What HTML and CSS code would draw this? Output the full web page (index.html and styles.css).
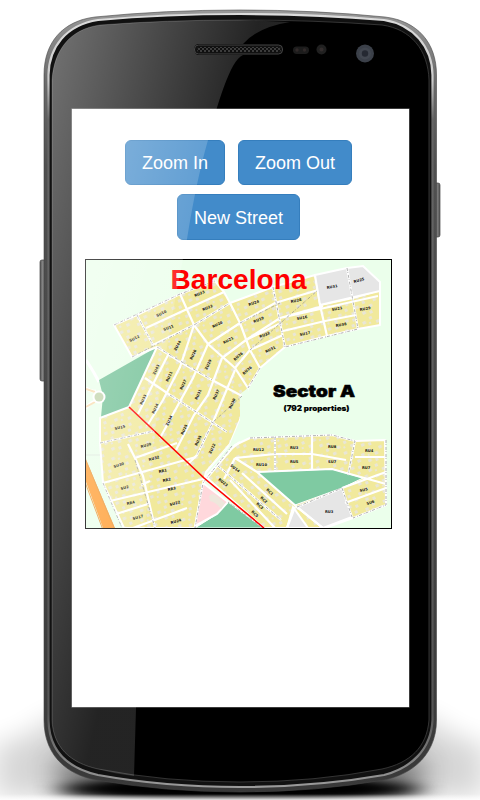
FILE: index.html
```html
<!DOCTYPE html>
<html lang="en">
<head>
<meta charset="utf-8">
<title>Barcelona</title>
<link rel="stylesheet" href="styles.css">
</head>
<body>
<div class="device">
<svg class="frame" viewBox="0 0 480 800" aria-hidden="true">
  <defs>
    <filter id="soft" x="-30%" y="-60%" width="160%" height="220%"><feGaussianBlur stdDeviation="16 12"/></filter>
    <filter id="contact" x="-20%" y="-100%" width="140%" height="300%"><feGaussianBlur stdDeviation="14 4"/></filter>
    <linearGradient id="rim" x1="0" y1="10" x2="0" y2="792" gradientUnits="userSpaceOnUse">
      <stop offset="0" stop-color="#999"/><stop offset=".1" stop-color="#686868"/><stop offset=".2" stop-color="#505050"/><stop offset="1" stop-color="#393939"/>
    </linearGradient>
    <linearGradient id="shine" x1="0" y1="10" x2="0" y2="792" gradientUnits="userSpaceOnUse">
      <stop offset="0" stop-color="#ddd"/><stop offset=".09" stop-color="#ccc"/><stop offset=".14" stop-color="#666"/><stop offset=".9" stop-color="#555"/><stop offset="1" stop-color="#a0a0a0"/>
    </linearGradient>
    <linearGradient id="floor" x1="0" y1="0" x2="0" y2="1"><stop offset="0" stop-color="#fff" stop-opacity="0"/><stop offset="1" stop-color="#fff"/></linearGradient>
    <linearGradient id="key"><stop offset="0" stop-color="#555"/><stop offset=".4" stop-color="#888"/><stop offset="1" stop-color="#555"/></linearGradient>
    <pattern id="mesh" width="4" height="4" patternUnits="userSpaceOnUse"><circle cx="1" cy="1" r="1"/><circle cx="3" cy="3" r="1"/></pattern>
  </defs>
  <path d="M-5 745Q35 738 55 715H425Q445 738 485 745V797H-5Z" fill="#000" opacity=".16" filter="url(#soft)"/>
  <path d="M60 752L90 770H390L420 752L415 798H65Z" fill="#000" opacity=".6" filter="url(#soft)"/>
  <ellipse cx="240" cy="789" rx="178" ry="11" fill="#000" filter="url(#contact)"/>
  <ellipse cx="240" cy="788" rx="140" ry="10" fill="#000" filter="url(#contact)"/>
  <rect y="794" width="480" height="7" fill="url(#floor)"/>
  <rect x="40" y="260" width="7" height="121" rx="2" fill="url(#key)" stroke="#444" stroke-width=".7"/>
  <rect x="434" y="183" width="6" height="54" rx="2" fill="url(#key)" stroke="#444" stroke-width=".7"/>
  <path d="M44 75C44 42 63 21 95 17Q165 10 240 10T385 17C417 21 436.500 42 436.500 75V720C436.500 754 413 774 384 780Q315 792 240 792T96 780C65 774 44 754 44 720Z" fill="url(#rim)" stroke="#444" stroke-width=".6"/>
  <path d="M48.500 75C49 47 66 25 98 20Q165 14 240 14T384 20C414 25 432 47 432.500 75V720C431 750 411 768 384 775Q315 787 240 787T98 775C67 768 49 750 48.500 720Z" fill="#111" stroke="url(#shine)" stroke-width="2.200"/>
  <path d="M52 80C54 50 70 29 100 25Q165 20 240 20T382 25C411 29 428 50 429 80V720C427 747 410 763 382 769Q315 782 240 782T98 769C70 763 53 747 52 720Z" fill="#000" stroke="#484848" stroke-width=".7"/>
  <rect x="194.500" y="45" width="88" height="9" rx="4" fill="#111" stroke="#444"/>
  <rect x="197" y="47" width="84" height="5" rx="2.500" fill="#3c3c3c"/>
  <rect x="197" y="47" width="84" height="5" rx="2.500" fill="url(#mesh)"/>
  <rect x="293" y="46.500" width="16" height="7.500" rx="3.700" fill="#1c1c1c"/>
  <circle cx="297" cy="50" r="1.700" fill="#302929"/><circle cx="304.500" cy="50" r="1.700" fill="#302929"/>
  <circle cx="321.500" cy="49.500" r="5" fill="#202020"/><circle cx="321.500" cy="49.500" r="2" fill="#332d2d"/>
  <circle cx="365" cy="53.500" r="9" fill="#3b4049"/><circle cx="365" cy="53.500" r="6" fill="#424750"/><circle cx="365" cy="53.500" r="3.200" fill="#252932"/>
</svg>
<main class="screen">
  <div class="toolbar">
    <button class="btn zoom-in">Zoom In</button>
    <button class="btn zoom-out">Zoom Out</button>
    <button class="btn street">New Street</button>
  </div>
  <svg class="map" viewBox="86 260 305 268">
    <defs>
      <pattern id="houses" width="19" height="17" patternUnits="userSpaceOnUse" patternTransform="rotate(-25)">
        <rect width="19" height="17" fill="#f1e99c"/>
        <path d="M2 3h3.500v3H2zM10 1h3v3h-3zM15 7h3.500v3h-3.500zM6 11h3.500v3H6zM13 13h3v3h-3zM8 6h2v2h-2z" fill="#e9e6d6"/>
      </pattern>
    </defs>
    <rect x="86" y="260" width="305" height="268" fill="#ebffeb"/>
    <path d="M86 360Q94 372 99 382M86 388Q91 392 96 391M86 408Q91 402 96 401" fill="none" stroke="#fff" stroke-width="3"/>
    <path d="M86 389L95 392M86 407L95 402" stroke="#f8dcae" stroke-width="2"/>
    <path d="M86 455H101" stroke="#dfe9df"/>
    <path d="M157 347L99 380L103 396L101 417L129 407L140 384Z" fill="#74c298"/>
    <g fill="url(#houses)" stroke="#fff" stroke-width="2" stroke-linejoin="round">
      <path d="M114 325L137 315L180 294L215 281L224 292L230 303L273 287L315 275L320 305L353 298L380 290V325L358 329L327 336L285 347L260 368L248 388L240 420L230 444L206 472L203 483L195 528H124L103 483L100 443V418L129 407L157 347L132 357Z"/>
      <path d="M206 477L235 445L250 438L332 435L355 441L385 440L386 505L353 518L325 528H264Z"/>
    </g>
    <path d="M248 388L240 394L240 420L230 444L206 472L226 448L240 438L250 410Z" fill="#ebffeb"/>
    <path d="M315 275L347 268L363 266L380 282V291L320 305ZM297 507L342 488L352 517L323 528ZM293 507L308 528H287Z" fill="#e6e6e6" stroke="#fff" stroke-width="2"/>
    <path d="M257 472L332 469L363 478L342 488L295 505ZM228 502L263 528H195L217 514Z" fill="#7fcaa2" stroke="#fff"/>
    <path d="M203 483L228 502L217 514L195 526Z" fill="#ffd8dc" stroke="#fff" stroke-width="2"/>
    <path d="M209 496Q213 492 218 497L225 503L221 509Q216 502 210 501Z" fill="#eee7dc"/>
    <path d="M86 460L115 528H103L86 482Z" fill="#ff9f36"/>
    <path d="M85 458L115 530M85 482L103 530" fill="none" stroke="#e99a40"/>
    <circle cx="99" cy="397" r="6.500" fill="#fff"/><circle cx="99" cy="397" r="4.500" fill="#c0d3aa"/>
    <g fill="none" stroke="#fff" stroke-width="2.200">
      <path d="M137 315L153 345M180 294L194 325M146 328L224 292M153 345L194 325L230 303M194 325L208 344L235 368L248 388"/>
      <path d="M157 347L182 363L212 380L242 396M145 378L170 395L227 432"/>
      <path d="M168 355L150 390L138 414M194 325L180 367L163 400L147 426M208 344L193 378L178 405L160 438M222 358L208 395L194 415L176 450M235 370L213 422L197 455L187 465"/>
      <path d="M230 303L240 323L208 344M240 323L275 303L318 290M222 358L246 340L280 318L323 306M246 340L279 324M235 368L250 350L283 335M240 323L250 350L260 368M273 287L285 347M280 318L378 296M283 331L325 321L356 315M320 305L327 336M347 268L358 329"/>
      <path d="M100 443L154 431M128 444L136 460L143 476L155 528M135 458L177 443M103 483L196 457M110 501L203 479M116 514L148 504M141 485L150 481M133 528L187 508"/>
      <path d="M235 458L275 454H312L346 460M355 457H385M235 458L257 472L332 469L386 484M275 437V472M312 436V470M355 441L348 475M342 488L386 472M345 503L386 488M218 466L281 520M235 458L224 479M242 473L287 514M230 480L275 528M257 472L297 507L323 528M295 507L287 528"/>
      <path d="M203 483L232 448L240 442"/>
    </g>
    <g class="rail">
      <path d="M132 357L194 325L230 303M114 325L180 294L215 281M137 315L153 345M157 347L212 380M250 350L318 290M170 395L227 432"/>
      <path d="M242 396L213 422L197 455M232 446L203 483L195 528M240 323L280 303M347 268L358 329L285 347M273 287L285 347M260 368L248 388"/>
      <path d="M135 460L155 528M103 483L122 528M100 443L154 431M250 438L332 435L355 441L348 475M275 437V472M386 440V505L353 518M297 507L342 488L352 517M218 466L281 520M263 528L228 502"/>
    </g>
    <path d="M129 407L204 478L264 528" fill="none" stroke="#f00" stroke-width="1.600"/>
    <g class="labels">
      <text transform="translate(130 342) rotate(-25)">SU12</text><text transform="translate(157 317) rotate(-25)">SU10</text><text transform="translate(164 331) rotate(-22)">SU11</text><text transform="translate(195 297) rotate(-23)">RU23</text><text transform="translate(203 311) rotate(-23)">RU22</text><text transform="translate(213 328) rotate(-25)">RU20</text><text transform="translate(224 344) rotate(-28)">RU21</text><text transform="translate(176 351) rotate(-60)">ZU44</text><text transform="translate(192 360) rotate(-65)">RU26</text><text transform="translate(207 370) rotate(-65)">ZU29</text>
      <text transform="translate(155 375) rotate(-65)">ZU43</text><text transform="translate(168 382) rotate(-65)">RU11</text><text transform="translate(182 390) rotate(-65)">RU27</text><text transform="translate(197 400) rotate(-65)">RU31</text><text transform="translate(215 400) rotate(-65)">RU37</text><text transform="translate(231 409) rotate(-65)">RU30</text><text transform="translate(142 405) rotate(-65)">RU33</text><text transform="translate(154 414) rotate(-65)">RU14</text><text transform="translate(168 426) rotate(-65)">ZU34</text><text transform="translate(183 435) rotate(-65)">RU25</text><text transform="translate(197 446) rotate(-65)">RU35</text><text transform="translate(211 454) rotate(-65)">ZU12</text>
      <text transform="translate(115 430) rotate(-14)">SU15</text><text transform="translate(141 448) rotate(-15)">RU29</text><text transform="translate(149 461) rotate(-15)">RU32</text><text transform="translate(114 468) rotate(-17)">SU30</text><text transform="translate(159 473) rotate(-12)">RR1</text><text transform="translate(163 482) rotate(-12)">RR2</text><text transform="translate(168 491) rotate(-12)">RR3</text><text transform="translate(121 490) rotate(-15)">SU2</text><text transform="translate(127 505) rotate(-12)">RR4</text><text transform="translate(170 506) rotate(-15)">SU22</text><text transform="translate(133 520) rotate(-15)">SU17</text><text transform="translate(171 524) rotate(-15)">RU24</text>
      <text transform="translate(249 306) rotate(-20)">RU24</text><text transform="translate(254 323) rotate(-22)">RU19</text><text transform="translate(260 338) rotate(-22)">RU22</text><text transform="translate(266 353) rotate(-25)">RU31</text><text transform="translate(244 375) rotate(-42)">RU36</text><text transform="translate(235 361) rotate(-42)">RU36</text><text transform="translate(291 303) rotate(-12)">RU28</text><text transform="translate(297 320) rotate(-10)">SU16</text><text transform="translate(300 336) rotate(-12)">SU17</text><text transform="translate(332 311) rotate(-10)">SU21</text><text transform="translate(336 327) rotate(-10)">RU38</text><text transform="translate(360 311) rotate(-10)">RU29</text><text transform="translate(327 289) rotate(-10)">RU31</text><text transform="translate(354 283) rotate(-15)">RU25</text>
      <text transform="translate(253 451)">RU12</text><text transform="translate(290 449)">RU3</text><text transform="translate(328 448)">RU8</text><text transform="translate(365 452)">RU4</text><text transform="translate(256 466)">RU10</text><text transform="translate(290 463)">RU5</text><text transform="translate(328 463)">SU7</text><text transform="translate(362 469)">RU7</text><text transform="translate(360 492) rotate(-13)">SU5</text><text transform="translate(367 505) rotate(-18)">SU6</text><text transform="translate(325 513)">RU3</text><text transform="translate(230 466) rotate(38)">SU14</text><text transform="translate(218 480) rotate(38)">RU23</text><text transform="translate(266 490) rotate(42)">RC1</text><text transform="translate(260 498) rotate(42)">RC2</text><text transform="translate(256 504) rotate(42)">RC3</text><text transform="translate(251 512) rotate(42)">RC5</text>
    </g>
    <text class="city" x="170.500" y="289" textLength="136">Barcelona</text>
    <text class="sector" x="273" y="397" textLength="82" lengthAdjust="spacingAndGlyphs">Sector A</text>
    <text class="count" x="283.500" y="411" textLength="66" lengthAdjust="spacingAndGlyphs">(792 properties)</text>
  </svg>
</main>
<svg class="gloss" viewBox="0 0 480 800" aria-hidden="true">
  <defs><linearGradient id="glass" x1="50" y1="60" x2="240" y2="104" gradientUnits="userSpaceOnUse"><stop offset="0" stop-color="#fff" stop-opacity=".44"/><stop offset="1" stop-color="#fff" stop-opacity=".14"/></linearGradient></defs>
  <path d="M52 80C54 50 70 29 100 25Q165 20 240 20L290 22Q258 27 243 44H198Q194 45 194 49Q194 54 198 55H243C230 60 217 106 208 140Q196 182 187 239C155 390 137 560 136 708L134 776Q115 774 98 769C70 763 53 747 52 720Z" fill="url(#glass)"/>
</svg>
</div>
</body>
</html>
```
FILE: styles.css
```css
body { margin: 0; background: #fff; font-family: "Liberation Sans", Arial, sans-serif; }
.device { position: relative; box-sizing: border-box; width: 480px; height: 800px; padding: 109px 71px 0 72px; overflow: hidden; }
.frame, .gloss { position: absolute; top: 0; left: 0; width: 480px; height: 800px; }
.gloss { pointer-events: none; }
.screen { position: relative; width: 337px; height: 598px; box-sizing: border-box; padding: 31px 0 0 13px; background: #fff; box-shadow: 0 0 0 .5px #777; }
.toolbar { display: flex; flex-wrap: wrap; justify-content: center; gap: 9px 13px; width: 307px; }
.btn { box-sizing: border-box; height: 45px; padding: 0; border: 1px solid #357ebd; border-radius: 6px; background: #428bca; color: #fff; font: 18px/24px "Liberation Sans", Arial, sans-serif; }
.zoom-in { width: 100px; }
.zoom-out { width: 114px; }
.street { width: 123px; height: 46px; padding-top: 2px; }
.map { display: block; width: 305px; height: 268px; margin-top: 19px; border: 1px solid #000; }
.rail { fill: none; stroke: #999; stroke-width: 1; stroke-dasharray: 3 1 1 2; opacity: .75; }
.labels { font: bold 3.7px "DejaVu Sans", sans-serif; fill: #111; }
.city { font: bold 28px "Liberation Sans", Arial, sans-serif; fill: #f00; }
.sector { font: 900 16.5px Inter, "Liberation Sans", sans-serif; stroke: #000; stroke-width: .5; }
.count { font: 900 7.3px Inter, "Liberation Sans", sans-serif; stroke: #000; stroke-width: .1; }
```
